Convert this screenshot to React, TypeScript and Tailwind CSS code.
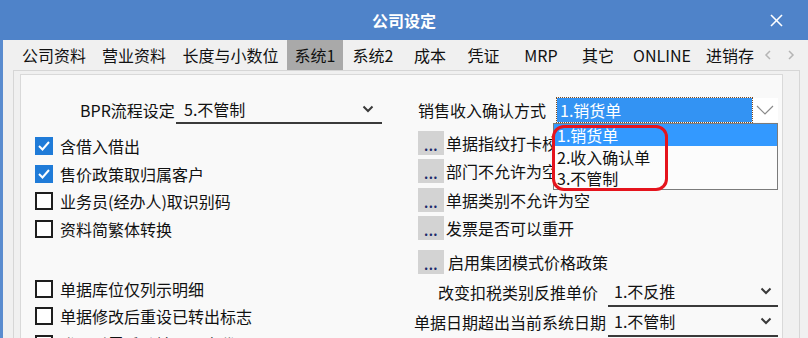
import React from "react";

const tabs = [
  { label: "公司资料", w: "w-[80px]" },
  { label: "营业资料", w: "w-[80px]" },
  { label: "长度与小数位", w: "w-[113px]" },
  { label: "系统1", w: "w-[56px]", active: true },
  { label: "系统2", w: "w-[60px]" },
  { label: "成本", w: "w-[54px]" },
  { label: "凭证", w: "w-[53px]" },
  { label: "MRP", w: "w-[62px]" },
  { label: "其它", w: "w-[52px]" },
  { label: "ONLINE", w: "w-[76px]" },
  { label: "进销存", w: "w-[60px]" },
];

const leftTop = [
  { label: "含借入借出", checked: true },
  { label: "售价政策取归属客户", checked: true },
  { label: "业务员(经办人)取识别码", checked: false },
  { label: "资料简繁体转换", checked: false },
];

const leftBottom = ["单据库位仅列示明细", "单据修改后重设已转出标志", "登录时需手动输入用户代号"];

const buttons = ["单据指纹打卡校验", "部门不允许为空", "单据类别不允许为空", "发票是否可以重开"];

function SmallChevron() {
  return (
    <svg width="12" height="8" viewBox="0 0 12 8">
      <polyline points="1.5,1.5 6,6 10.5,1.5" fill="none" stroke="#3a3a3a" strokeWidth="2" />
    </svg>
  );
}

function Checkbox({ checked }: { checked: boolean }) {
  if (checked) {
    return (
      <span className="w-[18px] h-[18px] bg-[#1f7bd8] flex items-center justify-center shrink-0">
        <svg width="14" height="14" viewBox="0 0 14 14">
          <polyline points="2,7 5.5,10.5 12,3" fill="none" stroke="#fff" strokeWidth="2" />
        </svg>
      </span>
    );
  }
  return <span className="w-[18px] h-[18px] border-2 border-[#1e1e1e] bg-white shrink-0" />;
}

function DotsButton() {
  return (
    <span className="w-[26px] h-[24px] bg-[#d3d3d3] flex items-end justify-center pb-[3px] shrink-0">
      <span className="text-[#1b2a6b] text-[13px] font-bold leading-none tracking-[0.5px]">...</span>
    </span>
  );
}

function UnderlineSelect({ value, w }: { value: string; w: string }) {
  return (
    <div className={`${w} h-[30px] border-b-2 border-[#3a3a3a] flex items-center justify-between pl-[6px] pr-[6px]`}>
      <span>{value}</span>
      <SmallChevron />
    </div>
  );
}

export default function App() {
  return (
    <div className="w-[808px] h-[338px] overflow-hidden bg-[#f0f0f0] font-['Microsoft_YaHei','Noto_Sans_CJK_SC',sans-serif] text-[16px] text-[#111] leading-none">
      {/* title bar */}
      <div className="h-[40px] bg-[#4f83c9] relative flex items-center justify-center">
        <span className="text-white font-bold text-[16px]">公司设定</span>
        <svg className="absolute right-[25px] top-[14px]" width="13" height="13" viewBox="0 0 13 13">
          <line x1="1" y1="1" x2="12" y2="12" stroke="#fff" strokeWidth="1.6" />
          <line x1="12" y1="1" x2="1" y2="12" stroke="#fff" strokeWidth="1.6" />
        </svg>
      </div>

      <div className="flex h-[298px]">
        <div className="w-[3px] bg-[#5a8ccf] shrink-0" />
        <div className="flex-1 flex flex-col">
          {/* tabs */}
          <div className="h-[30px] flex items-stretch pl-[11px] shrink-0">
            {tabs.map((t) => (
              <div
                key={t.label}
                className={`${t.w} flex items-center justify-center ${t.active ? "bg-[#a9a9a9]" : ""}`}
              >
                {t.label}
              </div>
            ))}
            <div className="flex items-center gap-[15px] pl-[4px] text-[#b0b0b0]">
              <svg width="8" height="10" viewBox="0 0 8 10">
                <polyline points="6,1 2,5 6,9" fill="none" stroke="#b5b5b5" strokeWidth="1.5" />
              </svg>
              <svg width="8" height="10" viewBox="0 0 8 10">
                <polyline points="2,1 6,5 2,9" fill="none" stroke="#b5b5b5" strokeWidth="1.5" />
              </svg>
            </div>
          </div>

          {/* tab page */}
          <div className="flex-1 ml-[10px] mr-[8px] border border-[#d6d6d6] bg-[#f0f0f0] pl-[6px] pr-[16px] pt-[3px]">
            <div className="h-full border border-[#d9d9d9] bg-[#f9f9f9] flex overflow-hidden">
              {/* left column */}
              <div className="w-[393px] pl-[14px] pt-[21px] flex flex-col shrink-0">
                <div className="h-[28px] flex items-center">
                  <span className="ml-[45px] w-[96px]">BPR流程设定</span>
                  <div className="w-[206px] h-[28px] border-b-2 border-[#3a3a3a] flex items-center justify-between pl-[8px] pr-[8px]">
                    <span>5.不管制</span>
                    <SmallChevron />
                  </div>
                </div>
                <div className="mt-[8.25px] flex flex-col">
                  {leftTop.map((c) => (
                    <div key={c.label} className="h-[27.5px] flex items-center gap-[7px]">
                      <Checkbox checked={c.checked} />
                      <span>{c.label}</span>
                    </div>
                  ))}
                </div>
                <div className="mt-[32.5px] flex flex-col">
                  {leftBottom.map((l) => (
                    <div key={l} className="h-[27.5px] flex items-center gap-[7px] shrink-0">
                      <Checkbox checked={false} />
                      <span>{l}</span>
                    </div>
                  ))}
                </div>
              </div>

              {/* right column */}
              <div className="w-[364px] pt-[21px] flex flex-col shrink-0">
                <div className="h-[28px] flex items-center relative z-10">
                  <span className="ml-[4px] w-[139px]">销售收入确认方式</span>
                  <div className="relative">
                    <div className="w-[195px] h-[24px] bg-[#3393f3] outline-1 outline-dotted outline-[#7a4a22] flex items-center pl-[3px] text-white">
                      1.销货单
                    </div>
                    <div className="absolute -left-[4px] top-[25px] w-[225px] h-[67px] border border-[#7b7b7b] bg-[#fcfcfc] flex flex-col">
                      <div className="h-[22px] bg-[#3399ff] text-white flex items-center pl-[3px]">1.销货单</div>
                      <div className="h-[22px] flex items-center pl-[3px]">2.收入确认单</div>
                      <div className="h-[22px] flex items-center pl-[3px]">3.不管制</div>
                      <div className="absolute -left-[2px] top-[1px] w-[116px] h-[66px] border-[3px] border-[#e5141d] rounded-[12px]" />
                    </div>
                  </div>
                  <div className="w-[26px] h-[24px] bg-white flex items-center justify-center">
                    <svg width="18" height="10" viewBox="0 0 18 10">
                      <polyline points="1,1 9,9 17,1" fill="none" stroke="#8a8a8a" strokeWidth="1.2" />
                    </svg>
                  </div>
                </div>

                <div className="mt-[4.5px] flex flex-col pl-[4px]">
                  {buttons.map((b) => (
                    <div key={b} className="h-[28.5px] flex items-center gap-[2px]">
                      <DotsButton />
                      <span>{b}</span>
                    </div>
                  ))}
                </div>
                <div className="mt-[5.5px] h-[28px] flex items-center pl-[4px] gap-[4px]">
                  <DotsButton />
                  <span>启用集团模式价格政策</span>
                </div>
                <div className="mt-[1px] h-[30px] flex items-center">
                  <span className="w-[194px] text-right pr-[10px]">改变扣税类别反推单价</span>
                  <UnderlineSelect value="1.不反推" w="w-[170px]" />
                </div>
                <div className="h-[30px] flex items-center shrink-0">
                  <span className="w-[194px] text-right pr-[2px]">单据日期超出当前系统日期</span>
                  <UnderlineSelect value="1.不管制" w="w-[170px]" />
                </div>
              </div>
            </div>
          </div>
        </div>
      </div>
    </div>
  );
}
